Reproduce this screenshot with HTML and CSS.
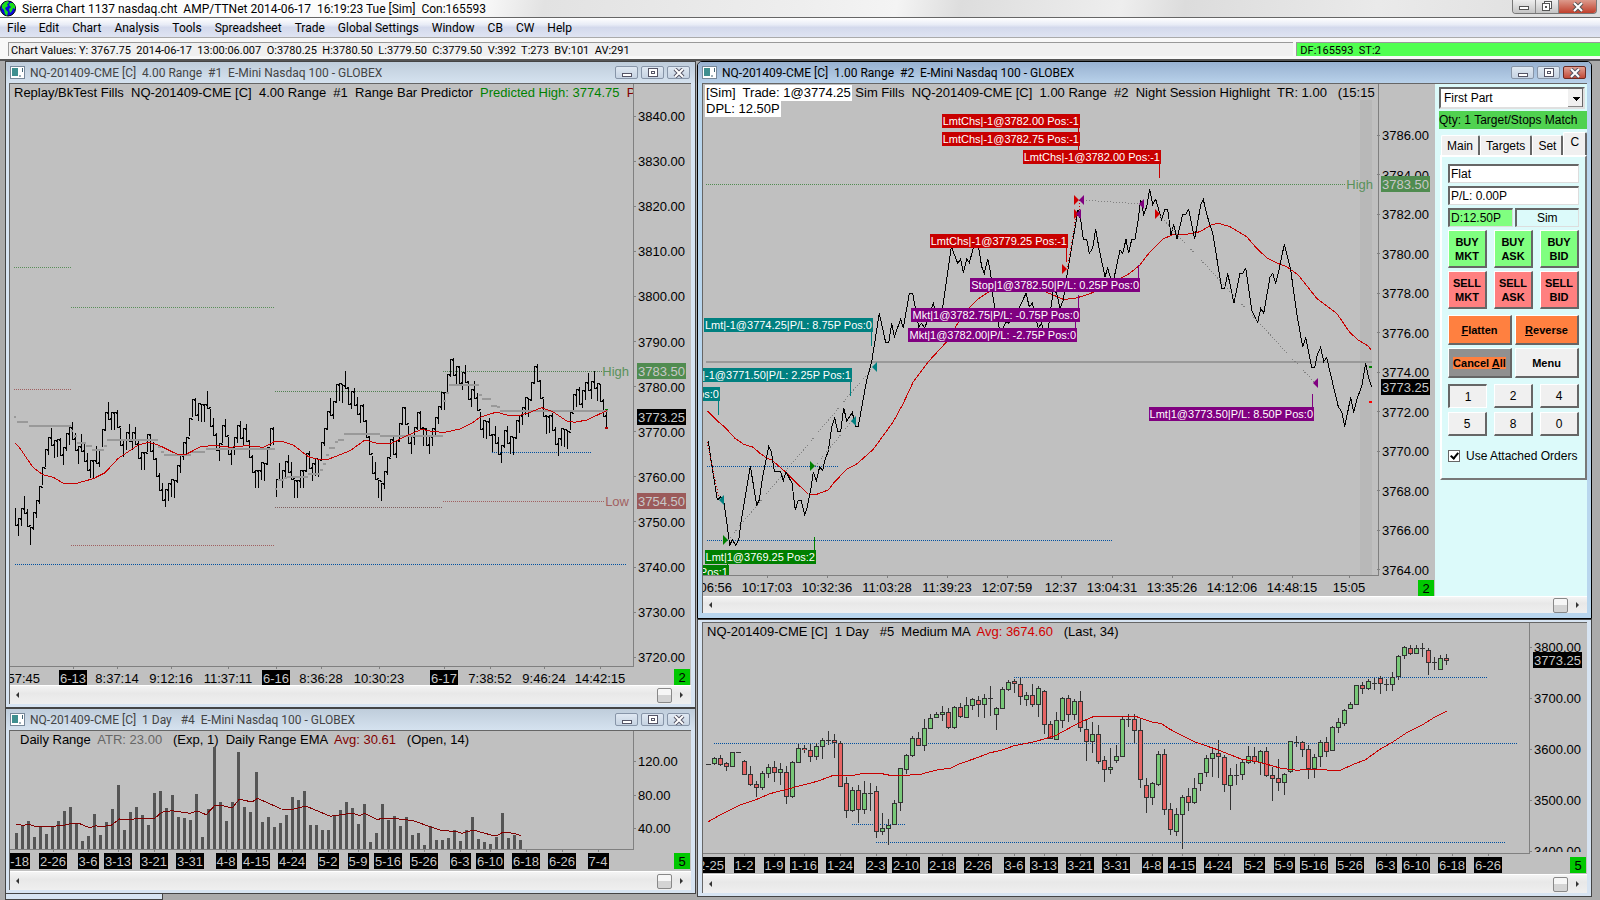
FILE: index.html
```html
<!DOCTYPE html>
<html lang="en">
<head>
    <meta charset="UTF-8">
    <meta name="viewport" content="width=device-width, initial-scale=1.0">
    <title>Sierra Chart</title>
    <link rel="stylesheet" href="styles.css">
</head>
<body>

<header class="titlebar">
    <svg class="globe" width="17" height="17" viewBox="0 0 17 17">
        <circle cx="8" cy="8.5" r="7.5" fill="#0a0ae0" stroke="#000"/>
        <path d="M2 5l3-3 3-1 1 2-2 1 1 2-3 2 1 2 2 2-1 4-2-2-1-4-2-2zM10 3l3 0 2 3 0 3-2-1-1 3-2 2-1-4 2-2-2-2z" fill="#19e019"/>
    </svg>
    <span class="app-title">Sierra Chart 1137 nasdaq.cht  AMP/TTNet 2014-06-17  16:19:23 Tue [Sim]  Con:165593</span>
    <div class="app-buttons">
        <button aria-label="Minimize"><svg width="12" height="9"><rect x="1.5" y="4.5" width="9" height="3" fill="#fff" stroke="#555"/></svg></button>
        <button aria-label="Restore"><svg width="12" height="11"><rect x="3.5" y=".5" width="7" height="7" fill="#fff" stroke="#555"/><rect x="1.5" y="2.5" width="7" height="7" fill="#fff" stroke="#555"/><rect x="4" y="5" width="2" height="2" fill="#555"/></svg></button>
        <button class="close" aria-label="Close"><svg width="12" height="10"><path d="M2 1l8 8M10 1l-8 8" stroke="#555" stroke-width="4"/><path d="M2 1l8 8M10 1l-8 8" stroke="#fff" stroke-width="2"/></svg></button>
    </div>
</header>

<nav class="menubar">
    <a href="#">File</a>
    <a href="#">Edit</a>
    <a href="#">Chart</a>
    <a href="#">Analysis</a>
    <a href="#">Tools</a>
    <a href="#">Spreadsheet</a>
    <a href="#">Trade</a>
    <a href="#">Global Settings</a>
    <a href="#">Window</a>
    <a href="#">CB</a>
    <a href="#">CW</a>
    <a href="#">Help</a>
</nav>

<div class="statusbar">
    <div class="values">Chart Values: Y: 3767.75  2014-06-17  13:00:06.007  O:3780.25  H:3780.50  L:3779.50  C:3779.50  V:392  T:273  BV:101  AV:291</div>
    <div class="feed">DF:165593  ST:2</div>
</div>

<main class="workspace">
    <div class="column left">
        <section class="window range-window">
            <div class="window-title">
                <svg class="chart-icon" width="15" height="13"><rect x=".5" y=".5" width="14" height="12" fill="#fff" stroke="#789"/><rect x="2" y="2" width="6" height="8" fill="#3f8f8f"/><path d="M9 10h2M12.500 2v4" stroke="#467"/></svg>
                <span>NQ-201409-CME [C]  4.00 Range  #1  E-Mini Nasdaq 100 - GLOBEX</span>
                <div class="window-buttons">
                    <button aria-label="Minimize"><svg width="12" height="9"><rect x="1.5" y="5.5" width="9" height="3" fill="#fff" stroke="#556"/></svg></button>
                    <button aria-label="Maximize"><svg width="12" height="9"><rect x="1.5" y=".5" width="9" height="8" fill="#fff" stroke="#556"/><rect x="4.5" y="3.5" width="3" height="2" fill="none" stroke="#556"/></svg></button>
                    <button aria-label="Close"><svg width="12" height="10"><path d="M2 1l8 8M10 1l-8 8" stroke="#556" stroke-width="4"/><path d="M2 1l8 8M10 1l-8 8" stroke="#fff" stroke-width="2"/></svg></button>
                </div>
            </div>
            <div class="view">
                <div class="canvas">
                    <svg id="rangeChart" class="chart" viewBox="10 84 681 601" preserveAspectRatio="xMinYMin"></svg>
                    <div class="study">Replay/BkTest Fills  NQ-201409-CME [C]  4.00 Range  #1  Range Bar Predictor  <span class="green">Predicted High: 3774.75</span>  <span class="dark-red">Predicted Low</span></div>
                </div>
                <div class="scrollbar"><i class="arrow-left"></i><i class="thumb"></i><i class="arrow-right"></i></div>
            </div>
        </section>

        <section class="window daily-window">
            <div class="window-title">
                <svg class="chart-icon" width="15" height="13"><rect x=".5" y=".5" width="14" height="12" fill="#fff" stroke="#789"/><rect x="2" y="2" width="6" height="8" fill="#3f8f8f"/><path d="M9 10h2M12.500 2v4" stroke="#467"/></svg>
                <span>NQ-201409-CME [C]  1 Day   #4  E-Mini Nasdaq 100 - GLOBEX</span>
                <div class="window-buttons">
                    <button aria-label="Minimize"><svg width="12" height="9"><rect x="1.5" y="5.5" width="9" height="3" fill="#fff" stroke="#556"/></svg></button>
                    <button aria-label="Maximize"><svg width="12" height="9"><rect x="1.5" y=".5" width="9" height="8" fill="#fff" stroke="#556"/><rect x="4.5" y="3.5" width="3" height="2" fill="none" stroke="#556"/></svg></button>
                    <button aria-label="Close"><svg width="12" height="10"><path d="M2 1l8 8M10 1l-8 8" stroke="#556" stroke-width="4"/><path d="M2 1l8 8M10 1l-8 8" stroke="#fff" stroke-width="2"/></svg></button>
                </div>
            </div>
            <div class="view">
                <div class="canvas">
                    <svg id="dailyChart" class="chart" viewBox="10 731 681 140" preserveAspectRatio="xMinYMin"></svg>
                    <div class="study indent">Daily Range  <span class="gray">ATR: 23.00</span>   (Exp, 1)  Daily Range EMA  <span class="dark-red">Avg: 30.61</span>   (Open, 14)</div>
                </div>
                <div class="scrollbar"><i class="arrow-left"></i><i class="thumb"></i><i class="arrow-right"></i></div>
            </div>
        </section>
        <div class="minimized"></div>
    </div>

    <div class="column right">
        <section class="window active trade-window">
            <div class="window-title">
                <svg class="chart-icon" width="15" height="13"><rect x=".5" y=".5" width="14" height="12" fill="#fff" stroke="#789"/><rect x="2" y="2" width="6" height="8" fill="#3f8f8f"/><path d="M9 10h2M12.500 2v4" stroke="#467"/></svg>
                <span>NQ-201409-CME [C]  1.00 Range  #2  E-Mini Nasdaq 100 - GLOBEX</span>
                <div class="window-buttons">
                    <button aria-label="Minimize"><svg width="12" height="9"><rect x="1.5" y="5.5" width="9" height="3" fill="#fff" stroke="#556"/></svg></button>
                    <button aria-label="Maximize"><svg width="12" height="9"><rect x="1.5" y=".5" width="9" height="8" fill="#fff" stroke="#556"/><rect x="4.5" y="3.5" width="3" height="2" fill="none" stroke="#556"/></svg></button>
                    <button class="close" aria-label="Close"><svg width="12" height="10"><path d="M2 1l8 8M10 1l-8 8" stroke="#556" stroke-width="4"/><path d="M2 1l8 8M10 1l-8 8" stroke="#fff" stroke-width="2"/></svg></button>
                </div>
            </div>
            <div class="view">
                <div class="split">
                    <div class="canvas">
                        <svg id="tradeChart" class="chart" viewBox="703 84 732 512" preserveAspectRatio="xMinYMin"></svg>
                        <div class="study trade-study"><span class="white">[Sim]  Trade: 1@3774.25</span> Sim Fills  NQ-201409-CME [C]  1.00 Range  #2  Night Session Highlight  TR: 1.00   (15:15
<span class="white">DPL: 12.50P</span></div>
                    </div>
                    <form class="panel">
                        <select class="config" aria-label="Trade configuration">
                            <option>First Part</option>
                        </select>
                        <div class="qty">Qty: 1 Target/Stops Match</div>
                        <div class="tabs">
                            <button type="button">Main</button>
                            <button type="button">Targets</button>
                            <button type="button">Set</button>
                            <button type="button" class="selected">C</button>
                        </div>
                        <div class="tab-page">
                            <input class="field" type="text" value="Flat" aria-label="Position">
                            <input class="field" type="text" value="P/L: 0.00P" aria-label="Profit and loss">
                            <div class="row pair">
                                <input class="field daily" type="text" value="D:12.50P" aria-label="Daily profit">
                                <input class="field sim" type="text" value="Sim" aria-label="Mode">
                            </div>
                            <div class="row orders">
                                <button type="button" class="buy">BUY<br>MKT</button>
                                <button type="button" class="buy">BUY<br>ASK</button>
                                <button type="button" class="buy">BUY<br>BID</button>
                                <button type="button" class="sell">SELL<br>MKT</button>
                                <button type="button" class="sell">SELL<br>ASK</button>
                                <button type="button" class="sell">SELL<br>BID</button>
                            </div>
                            <div class="row actions">
                                <button type="button" class="orange"><u>F</u>latten</button>
                                <button type="button" class="orange"><u>R</u>everse</button>
                                <button type="button" class="cancel"><span>Cancel <u>A</u>ll</span></button>
                                <button type="button">Menu</button>
                            </div>
                            <div class="row sizes">
                                <button type="button" class="pressed">1</button>
                                <button type="button">2</button>
                                <button type="button">4</button>
                                <button type="button">5</button>
                                <button type="button">8</button>
                                <button type="button">0</button>
                            </div>
                            <div class="attached">
                                <input type="checkbox" id="attached" checked>
                                <label for="attached">Use Attached Orders</label>
                            </div>
                        </div>
                    </form>
                </div>
                <div class="scrollbar"><i class="arrow-left"></i><i class="thumb"></i><i class="arrow-right"></i></div>
            </div>
        </section>

        <section class="window candle-window">
            <div class="view">
                <div class="canvas">
                    <svg id="candleChart" class="chart" viewBox="703 623 884 251" preserveAspectRatio="xMinYMin"></svg>
                    <div class="study">NQ-201409-CME [C]  1 Day   #5  Medium MA  <span class="red">Avg: 3674.60</span>   (Last, 34)</div>
                </div>
                <div class="scrollbar"><i class="arrow-left"></i><i class="thumb"></i><i class="arrow-right"></i></div>
            </div>
        </section>
    </div>
</main>

<script src="charts.js"></script>
</body>
</html>
```

FILE: styles.css
```css
* {
    box-sizing: border-box;
}

body {
    margin: 0;
    height: 100vh;
    display: flex;
    flex-direction: column;
    overflow: hidden;
    font-family: "Liberation Sans", Arial, sans-serif;
    font-size: 12px;
    color: #000;
    background-color: #ababab;
}

button,
input,
select {
    font-family: inherit;
    font-size: inherit;
    color: inherit;
    margin: 0;
    padding: 0;
}

/* top bars */
.titlebar {
    display: flex;
    align-items: flex-start;
    height: 18px;
    flex: none;
    background: linear-gradient(100deg, #fff 0%, #fafafa 30%, #e2e2e2 34%, #eee 50%, #f4f4f4 56%, #ddd 60%, #eee 70%, #dcdcdc 74%, #eaeaea 86%, #ddd 100%);
    border-bottom: 1px solid #666;
}

.app-title {
    flex: 1;
    margin-left: 5px;
    font: 12px/18px Roboto, sans-serif;
    white-space: pre;
}

.app-buttons {
    display: flex;
    height: 14px;
    margin-right: 3px;
    border: 1px solid #777;
    border-top: none;
    border-radius: 0 0 4px 4px;
    overflow: hidden;
}

.app-buttons button {
    display: flex;
    align-items: center;
    justify-content: center;
    width: 23px;
    border: none;
    border-right: 1px solid #888;
    background: linear-gradient(#eee, #c4c4c4);
}

.app-buttons .close {
    width: 37px;
    border-right: none;
    background: linear-gradient(#dc9a8c, #c0402c);
}

.menubar {
    display: flex;
    flex: none;
    gap: 13px;
    height: 20px;
    padding-left: 7px;
    background: linear-gradient(#fff, #e8ecf6 35%, #d3d9ec 50%, #dfe4f2);
    border-bottom: 1px solid #aaa;
}

.menubar a {
    font: 12px/20px Roboto, sans-serif;
    color: #000;
    text-decoration: none;
}

.statusbar {
    display: flex;
    flex: none;
    gap: 3px;
    height: 23px;
    padding: 4px 0 3px 8px;
    background-color: #f8f8f8;
    border-bottom: 2px solid #555;
    font: 11px/15px Roboto, sans-serif;
    white-space: pre;
}

.values {
    flex: 1288;
    padding-left: 2px;
    border: 1px solid #999;
    border-width: 1px 0 0 1px;
    background-color: #f0f0f0;
}

.feed {
    flex: 301;
    padding-left: 3px;
    border-top: 1px solid #999;
    border-left: 1px solid #999;
    background-color: #50ff50;
}

/* windows */
.workspace {
    display: grid;
    grid-template-columns: 691fr 895fr;
    gap: 1px;
    flex: 1;
    min-height: 0;
    padding: 0 8px 0 5px;
    background-color: #ababab;
}

.column {
    display: flex;
    flex-direction: column;
    min-width: 0;
    min-height: 0;
}

.column.right {
    padding-bottom: 3px;
}

.window {
    display: flex;
    flex-direction: column;
    min-height: 0;
    padding: 0 4px 3px 3px;
    border: 1px solid #444;
    background-color: #d7e4f2;
}

.right .window {
    padding-left: 4px;
}

.window.active {
    border-color: #000;
    background-color: #b9d6ee;
}

.range-window {
    flex: 642 1 0;
}

.daily-window {
    flex: 181 1 0;
}

.window.trade-window {
    flex: 551 1 0;
    padding-bottom: 5px;
    border-radius: 5px 5px 0 0;
}

.window.candle-window {
    flex: 271 1 0;
    padding-top: 2px;
}

.minimized {
    flex: none;
    width: 158px;
    height: 6px;
    border: 1px solid #444;
    border-top: none;
    background-color: #d7e4f2;
}

.window-title {
    display: flex;
    align-items: center;
    flex: none;
    height: 21px;
    margin: 0 -4px 0 -3px;
    padding: 0 5px 0 4px;
    background: linear-gradient(#bfcddb, #d5e2ef);
    color: #444;
    font: 12px/18px Roboto, sans-serif;
    white-space: pre;
}

.active .window-title {
    margin-left: -4px;
    background: linear-gradient(#98b1d0, #b8d1ea);
    border-radius: 4px 4px 0 0;
    color: #000;
}

.window-title span {
    flex: 1;
    margin-left: 5px;
}

.window-buttons {
    display: flex;
    gap: 3px;
}

.window-buttons button {
    display: flex;
    align-items: center;
    justify-content: center;
    width: 23px;
    height: 13px;
    border: 1px solid #8795a8;
    border-radius: 2px;
    background: linear-gradient(#dfe8f2, #c6d3e2);
}

.window-buttons .close {
    border-color: #6d2a22;
    background: linear-gradient(#e0a093, #c24a38);
}

.view {
    display: flex;
    flex-direction: column;
    flex: 1;
    min-height: 0;
    border-top: 1px solid #666;
    border-left: 1px solid #666;
    background-color: #c0c0c0;
}

.split {
    display: flex;
    flex: 1;
    min-height: 0;
}

.canvas {
    position: relative;
    flex: 1;
    min-width: 0;
    min-height: 0;
}

.chart {
    display: block;
    width: 100%;
    height: 100%;
}

.chart text {
    font-size: 13px;
}

.chart .tag {
    font-size: 11px;
}

.study {
    position: absolute;
    top: 1px;
    left: 4px;
    right: 58px;
    overflow: hidden;
    font-size: 13px;
    line-height: 16px;
    white-space: pre;
}

.study.indent {
    left: 10px;
}

.trade-study {
    left: 2px;
}

.study .white {
    background-color: #fff;
    padding: 1px;
}

.green {
    color: #008000;
}

.red {
    color: #d00000;
}

.dark-red {
    color: #800000;
}

.gray {
    color: #666;
}

.scrollbar {
    display: flex;
    align-items: center;
    flex: none;
    height: 19px;
    padding: 0 8px 0 6px;
    border-top: 1px solid #fff;
    background: linear-gradient(#f4f4f4, #e8e8e8 40%, #efefef);
}

.trade-window .scrollbar {
    height: 17px;
}

.arrow-left,
.arrow-right {
    border: 3px solid transparent;
    border-left-width: 0;
    border-right: 3px solid #333;
}

.arrow-right {
    border-right-width: 0;
    border-left: 3px solid #333;
}

.thumb {
    width: 15px;
    height: 15px;
    margin: 0 8px 0 auto;
    border: 1px solid #888;
    border-radius: 2px;
    background: linear-gradient(#f6f6f6 45%, #d4d4d4 50%);
}

/* trade panel */
.panel {
    flex: none;
    width: 152px;
    padding: 3px 0 0 4px;
    background-color: #dcfafa;
}

.config {
    display: block;
    appearance: none;
    width: 146px;
    height: 22px;
    padding: 0 3px;
    border: 2px solid #666;
    border-color: #666 #e0e0e0 #e0e0e0 #666;
    border-radius: 0;
    background: linear-gradient(#000, #000) 132px 8px / 7px 1px no-repeat,
        linear-gradient(#000, #000) 133px 9px / 5px 1px no-repeat,
        linear-gradient(#000, #000) 134px 10px / 3px 1px no-repeat,
        linear-gradient(#000, #000) 135px 11px / 1px 1px no-repeat,
        linear-gradient(#666, #666) 141px 0 / 1px 18px no-repeat,
        linear-gradient(#888, #888) 127px 17px / 15px 1px no-repeat,
        linear-gradient(#f0f0f0, #f0f0f0) 127px 0 / 15px 18px no-repeat,
        #fff;
}

.qty {
    height: 18px;
    margin-top: 2px;
    line-height: 18px;
    white-space: nowrap;
    overflow: hidden;
    background-color: #50d250;
}

.tabs {
    display: flex;
    align-items: flex-end;
    height: 26px;
    padding-left: 2px;
}

.tabs button {
    height: 20px;
    padding: 0 5px;
    border: 1px solid #fff;
    border-right: 2px solid #666;
    border-bottom: none;
    border-radius: 2px 2px 0 0;
    background-color: #f0f0f0;
}

.tabs .selected {
    height: 23px;
    padding: 0 6px 4px;
}

.tab-page {
    display: flex;
    flex-direction: column;
    gap: 3px;
    margin-left: 1px;
    height: 325px;
    padding: 7px 6px 0;
    border: 2px solid;
    border-color: #fff #777 #777 #fff;
    font-size: 12px;
}

.field {
    width: 100%;
    height: 19px;
    min-width: 0;
    padding: 0 1px;
    border: 1px solid;
    border-width: 2px 1px 1px 2px;
    border-color: #666 #ddd #ddd #666;
    border-radius: 0;
    background-color: #fff;
}

.field.daily {
    background-color: #80ff80;
}

.field.sim {
    background-color: #dcfafa;
    text-align: center;
}

.row {
    display: grid;
    gap: 3px;
    grid-template-columns: repeat(3, 39px);
    justify-content: space-between;
}

.row button {
    border: 1px solid;
    border-width: 1px 2px 2px 1px;
    border-color: #fff #666 #666 #fff;
    background-color: #f0f0f0;
}

.row.pair {
    grid-template-columns: 1fr 1fr;
    gap: 2px;
}

.row .buy,
.row .sell {
    height: 38px;
    font-size: 11px;
    font-weight: bold;
    line-height: 14px;
}

.row .buy {
    background-color: #80ff80;
}

.row .sell {
    background-color: #ff8080;
}

.row.actions {
    grid-template-columns: 1fr 1fr;
    margin-top: 3px;
}

.actions button {
    height: 30px;
    font-size: 11px;
    font-weight: bold;
}

.row .orange,
.cancel span {
    background-color: #ff8040;
}

.row .cancel {
    background-color: #909090;
}

.sizes {
    margin-top: 3px;
    row-gap: 4px;
}

.sizes button {
    height: 24px;
}

.row .pressed {
    border-width: 2px 1px 1px 2px;
    border-color: #666 #fff #fff #666;
}

.attached {
    display: flex;
    align-items: center;
    gap: 6px;
    margin-top: 10px;
    white-space: nowrap;
}

.attached input {
    appearance: none;
    width: 12px;
    height: 12px;
    border: 1px solid #666;
    background-color: #fff;
}

.attached input:checked::before {
    content: "";
    display: block;
    width: 3px;
    height: 6px;
    margin: 0 0 0 3px;
    border: solid #000;
    border-width: 0 2px 2px 0;
    transform: rotate(40deg);
}
```

FILE: charts.js
```js
const NS = 'http://www.w3.org/2000/svg';

function add(svg, name, attrs, text) {
    const el = document.createElementNS(NS, name);
    for (const key in attrs) el.setAttribute(key, attrs[key]);
    if (text !== undefined) el.textContent = text;
    svg.appendChild(el);
    return el;
}

function line(svg, x1, y1, x2, y2, color, extra) {
    return add(svg, 'path', Object.assign({
        d: `M${x1} ${y1}L${x2} ${y2}`, stroke: color, fill: 'none', 'shape-rendering': 'crispEdges'
    }, extra));
}

function dotted(svg, x1, x2, y, color) {
    line(svg, x1, Math.floor(y) + 0.5, x2, Math.floor(y) + 0.5, color, {'stroke-dasharray': '1 1'});
}

// the traces are recorded in thirds of a pixel, from the corner (ox, oy)
function seg(ox, oy, text) {
    return text.trim().split(/\s+/).map(p => {
        const [x, y] = p.split(',').map(Number);
        return [ox + x / 3, oy + y / 3];
    });
}

function curve(svg, points, color) {
    add(svg, 'polyline', {
        points: points.map(p => p[0].toFixed(1) + ',' + p[1].toFixed(1)).join(' '),
        fill: 'none', stroke: color, 'shape-rendering': 'crispEdges'
    });
}

function box(svg, x, y, w, h, fill) {
    add(svg, 'rect', {x, y, width: w, height: h, fill, 'shape-rendering': 'crispEdges'});
}

function axes(svg, left, top, right, bottom) {
    line(svg, right + 0.5, top, right + 0.5, bottom, '#808080');
    line(svg, left, bottom + 0.5, right + 1, bottom + 0.5, '#808080');
}

function price(svg, x, y, label) {
    line(svg, x - 5, Math.floor(y) + 0.5, x - 2, Math.floor(y) + 0.5, '#808080');
    add(svg, 'text', {x, y: Math.round(y) + 5}, label);
}

function priceBox(svg, x, y, label, fill, color) {
    box(svg, x - 1, y, 49, 16, fill);
    add(svg, 'text', {x, y: y + 13, fill: color}, label);
}

function times(svg, y, items) {
    items.forEach(([x, label, day, anchor]) => {
        const t = add(svg, 'text', {x, y: y + 5, 'text-anchor': anchor || 'middle'}, label);
        if (anchor !== 'end') line(svg, Math.floor(x) + 0.5, y - 12, Math.floor(x) + 0.5, y - 9, '#808080');
        if (day) {
            const b = t.getBBox();
            box(svg, Math.round(b.x) - 1, y - 8, Math.round(b.width) + 2, 16, '#000');
            t.setAttribute('fill', '#c8c8c8');
            svg.appendChild(t);
        }
    });
}

function chartNumber(svg, x, y, label) {
    box(svg, x, y, 16, 16, '#00c800');
    add(svg, 'text', {x: x + 8, y: y + 13, 'text-anchor': 'middle'}, label);
}

/* ---- #1, 4.00 range bars ---- */
(function () {
    const svg = document.getElementById('rangeChart');
    const tops = [505,535,503,468,508,560,517,481,437,382,326,290,265,300,297,293,320,280,262,247,278,318,283,313,340,
        360,360,318,328,268,216,186,217,217,210,265,296,275,253,277,262,303,337,335,282,282,305,357,400,430,446,430,
        418,420,375,345,307,290,234,177,173,190,192,192,153,207,235,280,310,255,237,290,320,292,255,243,265,253,300,
        345,391,390,365,370,320,265,260,418,370,390,362,345,367,420,420,390,390,340,334,370,355,358,305,264,212,175,
        184,132,130,135,93,141,152,145,172,195,192,240,290,347,367,420,428,392,350,297,290,300,250,202,200,257,288,
        262,215,212,265,265,288,263,232,198,157,155,102,57,55,77,77,97,75,125,148,122,160,215,240,242,235,283,258,
        290,314,270,258,288,290,240,225,200,170,178,126,78,72,122,177,228,225,218,260,293,264,266,272,215,162,147,
        140,150,127,100,123,93,130,132,178,210];

    dotted(svg, 14, 71, 267, '#5a8f5a');
    dotted(svg, 71, 275, 307, '#5a8f5a');
    dotted(svg, 14, 71, 389, '#a06060');
    dotted(svg, 71, 274, 545, '#a06060');
    dotted(svg, 275, 442, 391, '#508050');
    dotted(svg, 275, 442, 507, '#806060');
    dotted(svg, 443, 602, 371, '#508050');
    dotted(svg, 443, 604, 501, '#a06060');
    dotted(svg, 15, 626, 564, '#0050a0');
    dotted(svg, 492, 591, 452, '#0050a0');

    // one bar is always 4 points high, so the top and the direction are enough
    let d = '';
    tops.forEach((t, i) => {
        const x = 15.5 + i * 3;
        const y = Math.round(340 + t / 3);
        const next = tops[i + 1];
        d += `M${x} ${y}v18`;
        // close tick of this bar, then the open tick of the next one
        if (next !== undefined && i !== 86) {
            const down = next > t + 8;
            const close = down ? y + 17.5 : y + 0.5;
            d += `M${x} ${close}h2M${x + 1} ${down ? close - 1 : close + 1}h2`;
        }
    });
    add(svg, 'path', {d, stroke: '#000', fill: 'none', 'shape-rendering': 'crispEdges'});

    const steps = [[43,50,231],[52,86,246],[88,214,258],[214,221,272],[222,230,288],[231,257,309],[258,276,318],
        [277,312,330],[312,320,318],[321,473,300],[474,483,321],[483,491,336],[492,573,345],[574,617,336],
        [618,825,327],[825,832,447],[834,851,420],[852,860,414],[861,923,411],[924,959,402],[960,968,390],
        [969,977,372],[978,986,345],[987,1004,324],[1005,1013,306],[1014,1031,300],[1032,1140,282],[1140,1329,288],
        [1329,1337,183],[1338,1346,159],[1347,1436,135],[1437,1445,165],[1446,1472,177],[1473,1490,198],
        [1491,1499,201],[1500,1824,213]];
    steps.forEach(s => box(svg, Math.round(s[0] / 3), Math.round(339 + s[2] / 3), Math.round((s[1] - s[0]) / 3), 2, '#999'));

    curve(svg, seg(0, 340, `46,310 60,325 80,355 100,383 128,404 160,412 190,430 230,430 280,416 315,398 355,355
        415,315 445,307 475,315 530,342 560,342 600,321 640,316 690,322 740,317 790,322 825,304 850,305 880,315
        925,350 955,358 985,358 1050,332 1095,300 1130,310 1175,310 1220,287 1265,268 1300,275 1335,277 1380,267
        1415,250 1440,232 1490,216 1520,225 1560,226 1590,217 1625,203 1660,216 1700,243 1725,247 1760,240 1820,212`), '#c80000');

    box(svg, 605, 409, 3, 1, '#008000');
    box(svg, 605, 427, 3, 2, '#b00000');

    axes(svg, 10, 84, 633, 666);
    for (let i = 0; i <= 12; i++) price(svg, 638, 116 + 45.1 * i, (3840 - 10 * i).toFixed(2));
    add(svg, 'text', {x: 629, y: 376, 'text-anchor': 'end', fill: '#5a915a'}, 'High');
    add(svg, 'text', {x: 629, y: 506, 'text-anchor': 'end', fill: '#a06060'}, 'Low');
    priceBox(svg, 638, 363, '3783.50', '#508c50', '#c8c8c8');
    priceBox(svg, 638, 409, '3773.25', '#000', '#c8c8c8');
    priceBox(svg, 638, 493, '3754.50', '#9b5a5a', '#c8c8c8');
    times(svg, 678, [[40, '57:45', 0, 'end'], [73, '6-13', 1], [117, '8:37:14'], [171, '9:12:16'], [228, '11:37:11'],
        [276, '6-16', 1], [321, '8:36:28'], [379, '10:30:23'], [444, '6-17', 1], [490, '7:38:52'], [544, '9:46:24'], [600, '14:42:15']]);
    chartNumber(svg, 674, 669, '2');
})();

/* ---- #4, daily range ---- */
(function () {
    const svg = document.getElementById('dailyChart');
    const tops = [582,558,546,594,561,585,561,546,516,504,552,606,591,525,588,549,510,438,573,519,504,528,558,462,456,
        507,468,534,537,543,465,594,510,324,489,546,489,339,504,519,399,549,534,564,552,528,474,483,456,558,558,573,
        573,531,513,489,507,555,495,609,582,495,543,531,561,534,588,582,618,561,603,603,597,573,606,573,534,600,609,
        615,594,522,597,588,603];
    tops.forEach((t, i) => {
        const y = Math.round(639 + t / 3);
        box(svg, 15 + i * 6, y, 3, 849 - y, '#555');
    });
    const ema = [37,556,52,559,66,556,78,562,105,564,145,558,165,552,175,552,200,566,215,560,225,564,250,558,268,540,
        295,541,320,537,345,540,362,520,385,515,425,523,442,516,462,527,482,498,495,498,510,504,522,504,536,481,565,489,
        577,478,630,510,655,511,685,501,740,532,790,522,805,530,817,523,845,542,858,537,905,541,930,547,960,562,990,575,
        1020,577,1035,583,1060,573,1100,588,1115,589,1127,579,1150,583,1167,590];
    const points = [];
    for (let i = 0; i < ema.length; i += 2) points.push([ema[i] / 2.24, 639 + ema[i + 1] / 3]);
    curve(svg, points, '#800000');

    axes(svg, 10, 731, 633, 849);
    price(svg, 638, 761, '120.00');
    price(svg, 638, 795, '80.00');
    price(svg, 638, 828, '40.00');
    times(svg, 861, [[29, '-18', 1, 'end'], [53, '2-26', 1], [88, '3-6', 1], [118, '3-13', 1], [154, '3-21', 1],
        [190, '3-31', 1], [226, '4-8', 1], [256, '4-15', 1], [292, '4-24', 1], [328, '5-2', 1], [358, '5-9', 1],
        [388, '5-16', 1], [424, '5-26', 1], [460, '6-3', 1], [490, '6-10', 1], [526, '6-18', 1], [562, '6-26', 1], [598, '7-4', 1]]);
    chartNumber(svg, 674, 853, '5');
})();

/* ---- #2, 1.00 range with the order fills ---- */
(function () {
    const svg = document.getElementById('tradeChart');
    box(svg, 1360, 100, 12, 475, '#b8b8b8');
    dotted(svg, 706, 1345, 184, '#508c50');
    dotted(svg, 707, 838, 466, '#0050a0');
    dotted(svg, 707, 1113, 540, '#0050a0');
    box(svg, 706, 361, 666, 2, '#999');

    curve(svg, seg(700, 340, `22,213 35,225 55,245 75,262 105,295 130,312 160,322 180,340 200,354 215,360 250,390 290,430
        325,462 350,463 385,450 400,430 440,388 470,372 520,328 580,245 610,190 640,125 685,65 740,5`).concat(
        seg(700, 60, `770,795 810,742 830,720 860,700 900,680 960,670 1010,680 1040,697 1090,718 1120,716 1150,708`),
        seg(1040, 90, `165,605 230,570 265,553 300,525 330,485 370,447 400,433 430,435 480,425 515,404 535,400 570,410
        620,440 650,475 680,503 710,519 740,530 775,555 830,625 890,670 930,728 955,750 985,768 993,780`)), '#c80000');

    curve(svg, seg(700, 340, `25,303 33,360 52,480 62,470 72,490 80,545 89,615 97,600 107,615 116,600 124,540 151,378
        170,495 178,480 188,410 206,320 214,335 223,393 241,393 250,422 258,395 276,430 286,510 294,482 304,482 314,525
        322,500 332,450 340,395 349,422 359,380 368,392 376,355 385,335 395,260 404,233 413,274 422,274 431,203 440,243
        457,218 467,258 475,258 500,120 515,65`).concat(
        seg(700, 60, `538,760 557,848 566,848 575,790 583,830 602,777 610,805 628,700 638,700 656,800 665,790 674,805
        700,730 712,780 728,740 737,680 754,560 773,610 782,597 790,638 800,597 808,608 824,550 836,565 845,620 853,640
        863,597 872,640 880,720 898,805 908,805 918,785 925,790 950,760 978,700 988,740 997,730 1015,805 1024,790
        1034,820 1045,805 1060,690 1070,700 1080,745 1090,720 1100,650 1134,450 1142,480 1150,538 1160,538 1168,580
        1178,565 1187,507`),
        seg(1040, 90, `178,480 195,560 203,535 212,565 222,565 240,480 248,490 258,448 266,490 275,448 285,448 293,400
        302,330 311,373 320,350 329,297 338,343 347,328 365,390 374,358 383,358 393,435 401,403 411,447 428,373 437,373
        446,358 464,447 482,345 490,328 500,373 518,430 528,490 545,595 554,595 563,550 582,640 600,550 608,550 617,535
        635,660 653,698 662,655 671,670 690,562 698,550 707,580 716,545 733,463 752,540 770,670 788,772 797,742 815,832
        824,832 832,795 842,772 851,815 860,803 878,880 895,950 905,965 914,1010 932,922 941,968 950,930 966,885 977,820
        985,860 995,890`)), '#000');

    // entry to exit links
    const dash = {'stroke-dasharray': '1 2'};
    line(svg, 728, 540, 872, 368, '#808080', dash);
    line(svg, 815, 466, 852, 421, '#808080', dash);
    line(svg, 1083, 200, 1140, 204, '#808080', dash);
    line(svg, 1160, 216, 1314, 382, '#808080', dash);
    line(svg, 707, 442, 719, 498, '#c80000', dash);
    line(svg, 1067, 270, 1076, 216, '#c80000', dash);
    line(svg, 1079.5, 200, 1079.5, 213, '#c80000', dash);

    const right = (x, y, c) => add(svg, 'path', {d: `M${x} ${y - 5}l5 5l-5 5z`, fill: c});
    const left = (x, y, c) => add(svg, 'path', {d: `M${x} ${y}l5 -5v10z`, fill: c});
    right(1074, 200, '#d00000');
    left(1079, 200, '#800080');
    right(1074, 214, '#d00000');
    left(1076, 214, '#800080');
    right(1062, 269, '#d00000');
    left(1139, 204, '#800080');
    right(1155, 214, '#d00000');
    left(1313, 383, '#800080');
    left(719, 500, '#008080');
    left(851, 421, '#008080');
    left(872, 367, '#008080');
    right(723, 540, '#008000');
    right(810, 466, '#008000');
    box(svg, 1369, 366, 3, 2, '#008000');
    box(svg, 1369, 401, 3, 2, '#f00');

    // text, right edge, top, colour, start and end of the pointer line
    const tags = [
        ['LmtChs|-1@3782.00 Pos:-1', 1080, 114, '#c80000', 128, 132],
        ['LmtChs|-1@3782.75 Pos:-1', 1080, 132, '#c80000', 146, 150],
        ['LmtChs|-1@3782.00 Pos:-1', 1161, 150, '#c80000', 164, 178],
        ['LmtChs|-1@3779.25 Pos:-1', 1068, 234, '#c80000', 248, 262],
        ['Stop|1@3782.50|P/L: 0.25P Pos:0', 1140, 278, '#800080', 265, 278],
        ['Mkt|1@3782.75|P/L: -0.75P Pos:0', 1080, 308, '#800080', 295, 308],
        ['Mkt|1@3782.00|P/L: -2.75P Pos:0', 1077, 328, '#800080', 322, 328],
        ['Lmt|1@3773.50|P/L: 8.50P Pos:0', 1314, 407, '#800080', 394, 407],
        ['Lmt|-1@3774.25|P/L: 8.75P Pos:0', 873, 318, '#008080', 332, 346],
        ['Stop|-1@3771.50|P/L: 2.25P Pos:1', 852, 368, '#008080', 382, 396],
        ['Pos:0', 720, 387, '#008080', 401, 415],
        ['Lmt|1@3769.25 Pos:2', 816, 550, '#008000', 537, 550],
        ['Pos:1', 729, 565, '#008000', 562, 565]
    ];
    tags.forEach(([label, x, y, color, y1, y2]) => {
        const t = add(svg, 'text', {x: x - 1, y: y + 11, 'text-anchor': 'end', fill: '#fff', class: 'tag'}, label);
        const w = Math.round(t.getComputedTextLength()) + 2;
        box(svg, x - w, y, w, 14, color);
        line(svg, x - 1.5, y1, x - 1.5, y2, color);
        svg.appendChild(t);
    });

    // time axis covers the lowest tag
    box(svg, 703, 575, 732, 21, '#c0c0c0');
    axes(svg, 703, 84, 1378, 575);
    for (let i = 0; i < 12; i++) price(svg, 1382, 135 + 39.5 * i, (3786 - 2 * i).toFixed(2));
    box(svg, 1380, 575, 55, 21, '#c0c0c0');
    add(svg, 'text', {x: 1373, y: 189, 'text-anchor': 'end', fill: '#5a915a'}, 'High');
    priceBox(svg, 1382, 176, '3783.50', '#508c50', '#c8c8c8');
    priceBox(svg, 1382, 379, '3773.25', '#000', '#c8c8c8');
    times(svg, 587, [[732, '06:56', 0, 'end'], [767, '10:17:03'], [827, '10:32:36'], [887, '11:03:28'], [947, '11:39:23'],
        [1007, '12:07:59'], [1061, '12:37'], [1112, '13:04:31'], [1172, '13:35:26'], [1232, '14:12:06'], [1292, '14:48:15'], [1349, '15:05']]);
    chartNumber(svg, 1418, 580, '2');
})();

/* ---- #5, daily candles ---- */
(function () {
    const svg = document.getElementById('candleChart');
    // body top, body bottom, high, low, g = up, r = down, d = doji
    const candles = `433 433 433 433 d|415 431 412 434 g|415 434 405 438 r|430 440 427 453 r|397 440 397 440 g|397 397 397 397 d|
423 464 420 464 r|463 494 438 497 r|492 503 484 530 r|460 503 453 509 g|442 461 432 474 g|441 458 423 486 r|446 458 430 494 g|
457 530 438 552 r|427 530 422 533 g|385 428 371 428 g|385 391 376 398 r|390 412 372 426 r|378 412 370 420 g|361 380 353 417 g|
360 360 333 376 d|361 370 343 414 r|370 500 364 500 r|490 572 472 594 r|511 572 502 575 g|511 570 495 609 r|520 569 482 581 g|
518 518 489 573 d|514 635 498 654 r|625 635 579 645 g|616 626 598 675 g|550 616 540 616 g|445 550 445 572 g|406 449 402 462 g|
355 407 348 412 g|355 377 337 377 r|325 377 297 392 g|295 326 283 326 g|283 295 277 295 g|277 284 258 303 g|277 323 265 326 r|
262 323 258 326 g|262 290 249 293 r|256 293 231 293 g|238 257 234 269 g|241 255 228 291 r|235 255 222 294 g|235 235 198 288 d|
265 284 262 329 g|208 266 201 266 g|187 209 180 213 g|184 193 177 219 r|193 230 174 254 r|226 241 216 258 g|226 254 193 261 r|
205 254 198 290 g|213 314 210 342 r|313 356 304 356 r|301 361 277 361 g|235 302 231 323 g|235 284 225 305 r|244 284 237 300 g|
244 323 213 336 r|328 365 300 423 r|343 365 306 398 g|343 425 315 432 r|421 449 408 486 r|442 449 385 461 g|409 422 374 429 g|
298 410 291 410 g|298 298 282 321 d|298 332 282 370 r|331 479 294 504 r|496 533 474 578 r|490 533 487 555 g|403 494 394 497 g|
403 570 387 585 r|568 629 549 645 r|583 635 564 648 g|532 584 525 686 g|529 548 504 573 r|505 548 475 551 g|458 491 458 513 g|
415 458 405 471 g|400 416 386 471 g|400 412 360 474 r|412 494 406 516 r|466 497 444 570 g|464 464 432 495 d|427 464 416 480 g|
409 428 378 432 g|409 425 381 431 r|394 428 390 465 g|394 467 381 471 r|466 476 440 543 r|475 488 418 513 r|463 488 458 525 g|
364 455 364 458 g|366 366 348 380 d|367 391 362 411 r|388 446 375 477 r|412 446 402 474 g|367 412 360 441 g|367 395 351 411 r|
322 392 318 392 g|307 323 294 339 g|271 311 267 318 g|253 266 246 266 g|196 254 196 254 g|196 206 186 222 r|184 206 177 209 g|
188 188 174 210 d|174 193 168 222 r|193 193 177 213 d|170 194 156 213 g|109 170 105 179 g|82 109 78 117 g|85 101 75 104 r|
85 101 75 101 g|84 84 69 111 d|91 128 84 165 r|125 125 111 150 d|115 149 105 149 g|115 122 102 135 r`;

    dotted(svg, 714, 1517, 743, '#0050a0');
    dotted(svg, 1014, 1487, 677, '#0050a0');
    dotted(svg, 852, 905, 824, '#0050a0');
    dotted(svg, 876, 1505, 842, '#0050a0');

    candles.split('|').forEach((c, i) => {
        const [t, b, h, l, kind] = c.trim().split(' ');
        const x = 708 + i * 6;
        const y = v => Math.round(620 + v / 3);
        if (y(l) > y(h)) box(svg, x, y(h), 1, y(l) - y(h), '#333');
        if (kind === 'd') {
            box(svg, x - 2, y(t), 5, 1, '#333');
        } else {
            box(svg, x - 2, y(t), 5, y(b) - y(t), '#333');
            box(svg, x - 1, y(t) + 1, 3, Math.max(1, y(b) - y(t) - 2), kind === 'g' ? '#78c878' : '#e66464');
        }
    });

    curve(svg, seg(700, 620, `25,605 65,582 115,557 170,538 210,521 240,513 275,504 355,483 400,466 460,466 490,460 540,460
        570,466 620,466 665,462 710,450 750,445 780,431 835,412 870,398 900,392 940,378 1000,366 1040,355 1070,345
        1110,323 1150,303 1180,290 1240,289 1270,291 1310,290`).concat(
        seg(1140, 620, `0,294 35,306 65,311 90,328 165,366 235,390 305,418 340,423 375,431 420,444 470,451 500,448 540,448
        570,451 600,451 650,429 675,420 720,388 760,365 800,338 850,313 880,294 920,273`)), '#c80000');

    for (let i = 0; i < 5; i++) price(svg, 1534, 647 + 51 * i, (3800 - 100 * i).toFixed(2));
    box(svg, 1530, 852, 57, 22, '#c0c0c0');
    axes(svg, 703, 623, 1529, 853);
    priceBox(svg, 1534, 652, '3773.25', '#000', '#c8c8c8');
    times(svg, 865, [[724, '2-25', 1, 'end'], [744, '1-2', 1], [774, '1-9', 1], [804, '1-16', 1], [840, '1-24', 1],
        [876, '2-3', 1], [906, '2-10', 1], [942, '2-18', 1], [978, '2-26', 1], [1014, '3-6', 1], [1044, '3-13', 1],
        [1080, '3-21', 1], [1116, '3-31', 1], [1152, '4-8', 1], [1182, '4-15', 1], [1218, '4-24', 1], [1254, '5-2', 1],
        [1284, '5-9', 1], [1314, '5-16', 1], [1350, '5-26', 1], [1386, '6-3', 1], [1416, '6-10', 1], [1452, '6-18', 1], [1488, '6-26', 1]]);
    chartNumber(svg, 1570, 857, '5');
})();
```
